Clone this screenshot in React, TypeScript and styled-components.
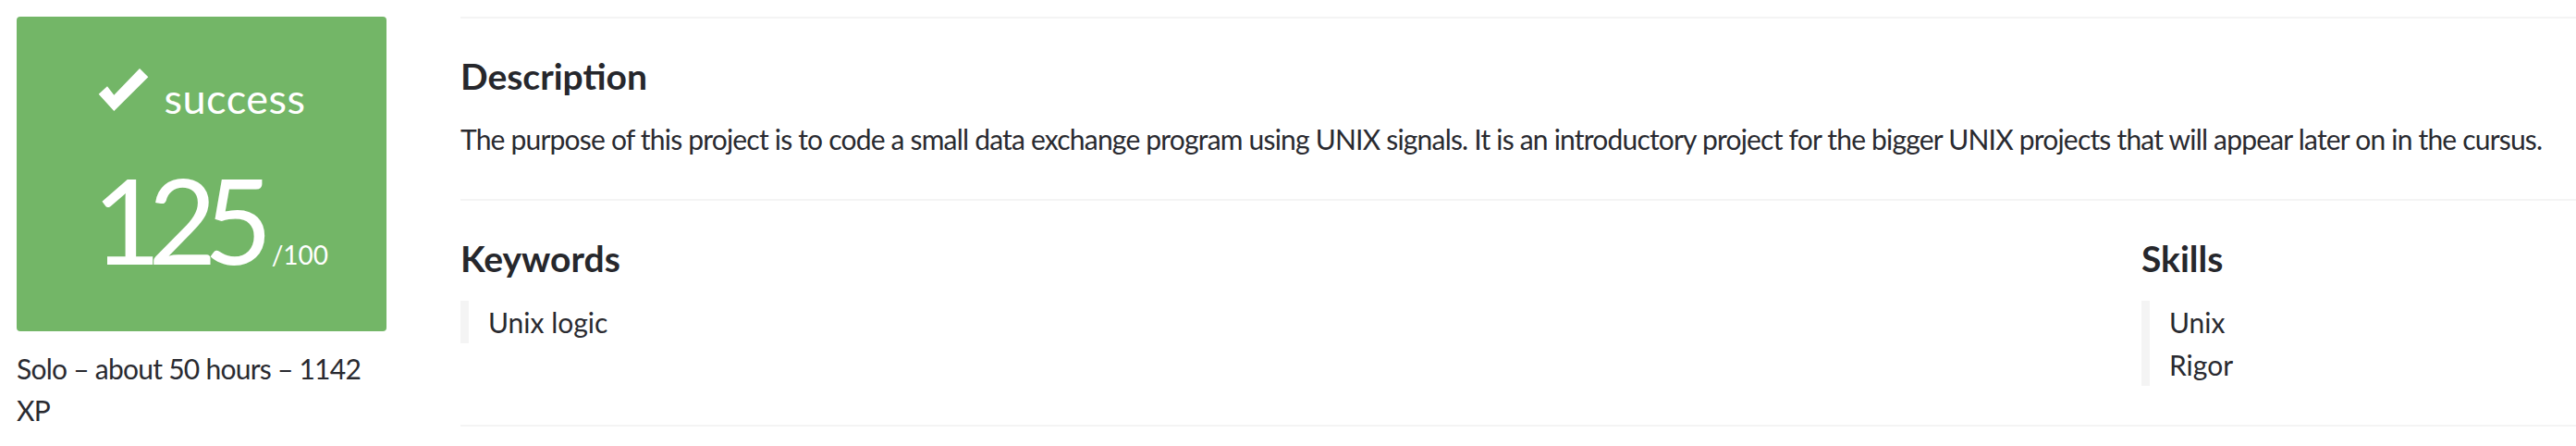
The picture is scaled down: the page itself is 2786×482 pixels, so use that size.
import React from "react";
import styled, { createGlobalStyle } from "styled-components";

const GlobalStyle = createGlobalStyle`
  html, body {
    margin: 0;
    padding: 0;
    background: #ffffff;
  }
  body {
    font-family: Lato, "Liberation Sans", sans-serif;
    color: #292a30;
  }
`;

const Page = styled.div`
  display: flex;
  align-items: flex-start;
  gap: 80px;
  padding: 18px 0 0 18px;
`;

const Summary = styled.aside`
  width: 400px;
  flex-shrink: 0;
`;

const ScoreCard = styled.div`
  height: 340px;
  background: #73b667;
  border-radius: 4px;
  display: flex;
  flex-direction: column;
  align-items: center;
  color: #ffffff;
`;

const StatusRow = styled.div`
  display: flex;
  align-items: flex-start;
  gap: 17px;
  margin-top: 55px;
`;

const StatusText = styled.span`
  font-size: 45px;
  line-height: 45px;
  margin-top: 11px;
  letter-spacing: 0.5px;
`;

const ScoreRow = styled.div`
  display: flex;
  align-items: baseline;
  margin-top: 44px;
  padding-left: 19px;
`;

const Mark = styled.span`
  font-size: 128px;
  line-height: 1;
  letter-spacing: -14px;
`;

const MaxMark = styled.span`
  font-size: 28px;
  line-height: 1;
  margin-left: 13px;
`;

const Meta = styled.p`
  margin: 18px 0 0;
  font-size: 30px;
  line-height: 45px;
  letter-spacing: -0.75px;
`;

const Details = styled.main`
  flex: 1;
  border-top: 2px solid #f4f4f4;
`;

const Section = styled.section`
  border-bottom: 2px solid #f4f4f4;
  padding: 42px 0 42px;
`;

const Columns = styled.div`
  display: grid;
  grid-template-columns: 1fr 470px;
`;

const Heading = styled.h4`
  margin: 0;
  font-size: 39px;
  line-height: 41px;
  font-weight: 700;
  color: #26272c;
`;

const Paragraph = styled.p`
  margin: 25px 0 0;
  font-size: 30px;
  line-height: 45px;
  letter-spacing: -0.8px;
  white-space: nowrap;
`;

const TagList = styled.ul`
  list-style: none;
  margin: 25px 0 0;
  padding: 0 0 0 21px;
  border-left: 9px solid #f4f4f4;
  width: max-content;
`;

const TagItem = styled.li`
  font-size: 30px;
  line-height: 46px;
`;

const CheckIcon = () => (
  <svg width="55" height="48" viewBox="0 0 55 48" aria-hidden="true">
    <polygon
      points="0.7,28.7 10,20.3 17.3,29.7 45,1 54.3,10.3 17.3,47"
      fill="#ffffff"
    />
  </svg>
);

export default function App() {
  return (
    <>
      <GlobalStyle />
      <Page>
        <Summary>
          <ScoreCard>
            <StatusRow>
              <CheckIcon />
              <StatusText>success</StatusText>
            </StatusRow>
            <ScoreRow>
              <Mark>125</Mark>
              <MaxMark>/100</MaxMark>
            </ScoreRow>
          </ScoreCard>
          <Meta>Solo – about 50 hours – 1142 XP</Meta>
        </Summary>
        <Details>
          <Section>
            <Heading>Description</Heading>
            <Paragraph>
              The purpose of this project is to code a small data exchange program using UNIX signals. It is an introductory project for the bigger UNIX projects that will appear later on in the cursus.
            </Paragraph>
          </Section>
          <Section>
            <Columns>
              <div>
                <Heading>Keywords</Heading>
                <TagList>
                  <TagItem>Unix logic</TagItem>
                </TagList>
              </div>
              <div>
                <Heading>Skills</Heading>
                <TagList>
                  <TagItem>Unix</TagItem>
                  <TagItem>Rigor</TagItem>
                </TagList>
              </div>
            </Columns>
          </Section>
        </Details>
      </Page>
    </>
  );
}
